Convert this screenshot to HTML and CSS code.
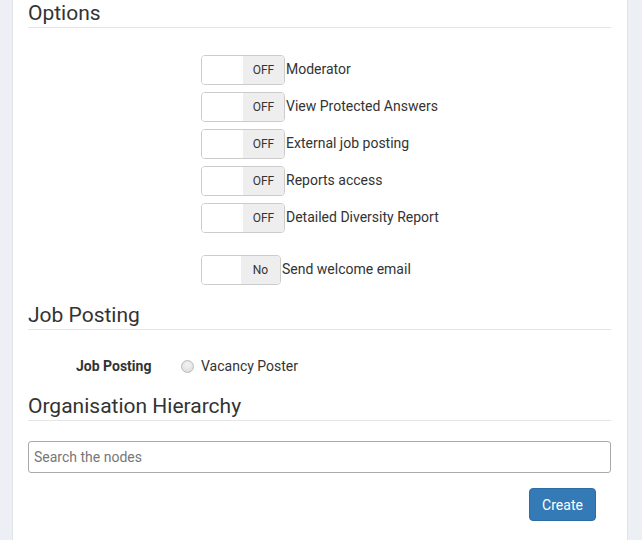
FILE: index.html
```html
<!DOCTYPE html>
<html>
<head>
<meta charset="utf-8">
<link rel="stylesheet" href="styles.css">
</head>
<body>
<div class="panel">
  <h4 class="section-title">Options</h4>
  <div class="toggles">
    <div class="toggle-row"><span class="toggle"><span class="knob"></span><span class="state">OFF</span></span><span class="label">Moderator</span></div>
    <div class="toggle-row"><span class="toggle"><span class="knob"></span><span class="state">OFF</span></span><span class="label">View Protected Answers</span></div>
    <div class="toggle-row"><span class="toggle"><span class="knob"></span><span class="state">OFF</span></span><span class="label">External job posting</span></div>
    <div class="toggle-row"><span class="toggle"><span class="knob"></span><span class="state">OFF</span></span><span class="label">Reports access</span></div>
    <div class="toggle-row"><span class="toggle"><span class="knob"></span><span class="state">OFF</span></span><span class="label">Detailed Diversity Report</span></div>
    <div class="toggle-row welcome"><span class="toggle small"><span class="knob"></span><span class="state">No</span></span><span class="label">Send welcome email</span></div>
  </div>
  <h4 class="section-title jp">Job Posting</h4>
  <div class="radio-row">
    <span class="radio-label">Job Posting</span>
    <span class="radio"></span>
    <span class="radio-text">Vacancy Poster</span>
  </div>
  <h4 class="section-title oh">Organisation Hierarchy</h4>
  <input class="search" type="text" placeholder="Search the nodes">
  <div class="actions"><button class="btn">Create</button></div>
</div>
</body>
</html>
```
FILE: styles.css
```css
html, body {
  margin: 0;
  padding: 0;
  background: #ecf0f5;
  font-family: Roboto, "Liberation Sans", sans-serif;
  color: #333;
}
.panel {
  margin-left: 12px;
  width: 583px;
  height: 540px;
  background: #fff;
  border-left: 1px solid #dfe3e8;
  border-right: 1px solid #dfe3e8;
  padding: 1px 16px 0 15px;
  box-sizing: content-box;
}
.section-title {
  margin: 0;
  font-size: 21px;
  font-weight: 400;
  line-height: 24px;
  padding-bottom: 2px;
  border-bottom: 1px solid #e5e5e5;
  color: #333;
}
.section-title.jp { margin-top: 18px; }
.section-title.oh { margin-top: 17px; }
.toggles {
  display: flex;
  flex-direction: column;
  gap: 7px;
  padding-left: 173px;
  margin-top: 27px;
}
.toggle-row {
  display: flex;
  align-items: center;
  height: 30px;
  font-size: 14px;
  line-height: 16px;
}
.toggle-row .label { margin-top: -2px; }
.toggle-row.welcome { margin-top: 15px; }
.toggle {
  display: flex;
  width: 82px;
  height: 28px;
  border: 1px solid #ccc;
  border-radius: 4px;
  overflow: hidden;
  margin-right: 1px;
}
.toggle.small { width: 78px; margin-right: 1px; }
.knob {
  width: 41px;
  background: #fff;
}
.toggle.small .knob { width: 39px; }
.state {
  flex: 1;
  background: #eee;
  display: flex;
  align-items: center;
  justify-content: center;
  font-size: 12px;
  color: #333;
}
.label { color: #333; }
.radio-row {
  display: flex;
  align-items: center;
  height: 22px;
  margin-top: 25px;
  font-size: 14px;
}
.radio-label {
  font-weight: 700;
  margin-left: 48px;
  width: 105px;
}
.radio {
  width: 11px;
  height: 11px;
  border-radius: 50%;
  border: 1px solid #bbb;
  background: radial-gradient(circle at 50% 35%, #f4f4f4, #d8d8d8);
  margin-right: 7px;
}
.radio-text { color: #333; }
.search {
  display: block;
  margin-top: 20px;
  width: 100%;
  height: 32px;
  box-sizing: border-box;
  border: 1px solid #aaa;
  border-radius: 3px;
  padding: 0 5px;
  font-family: Roboto, "Liberation Sans", sans-serif;
  font-size: 14px;
  color: #555;
}
.search::placeholder { color: #777; }
.actions {
  display: flex;
  justify-content: flex-end;
  padding-right: 15px;
  margin-top: 15px;
}
.btn {
  width: 67px;
  height: 33px;
  background: #337ab7;
  border: 1px solid #2e6da4;
  border-radius: 4px;
  color: #fff;
  font-family: Roboto, "Liberation Sans", sans-serif;
  font-size: 14px;
}
```
